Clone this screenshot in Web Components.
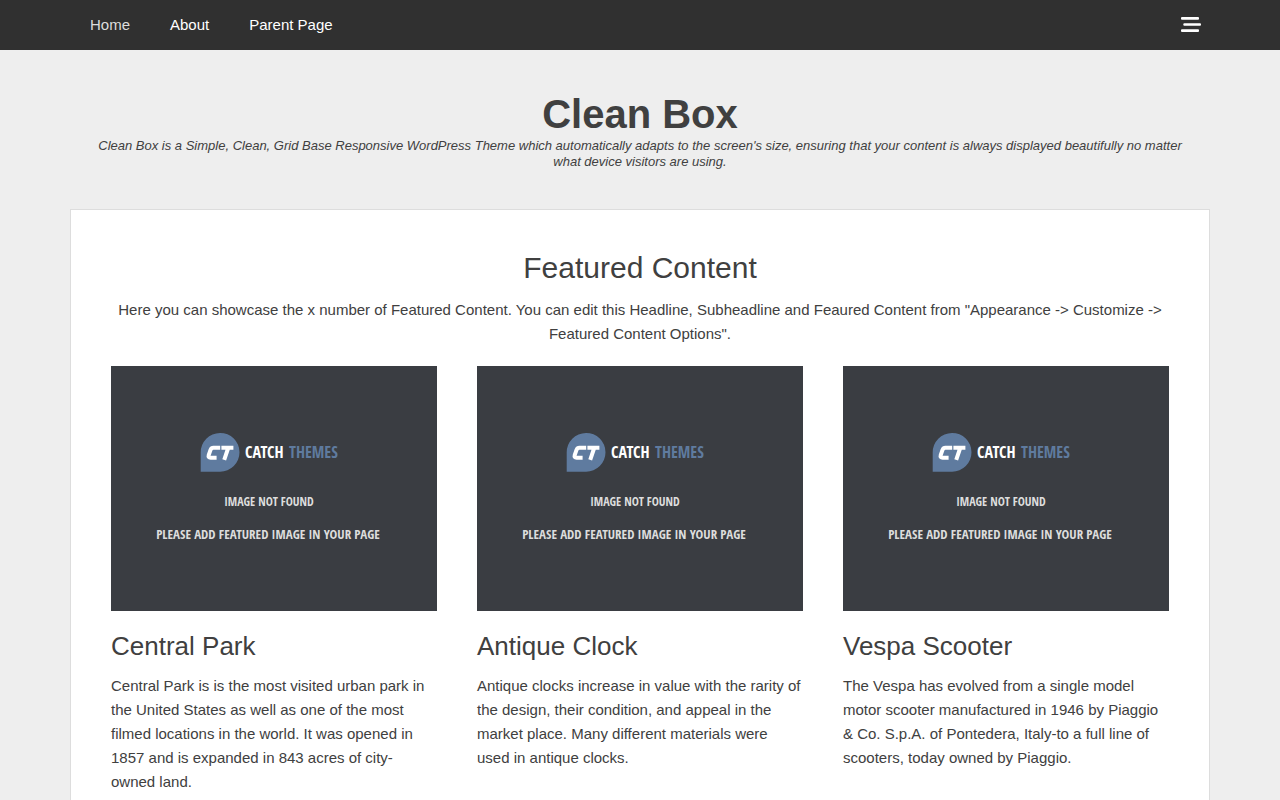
<!DOCTYPE html>
<html lang="en">
<head>
<meta charset="utf-8">
<meta name="viewport" content="width=device-width, initial-scale=1">
<title>Clean Box</title>
<style>
  body { margin: 0; background: #eee; color: #404040; font: 15px/24px "Liberation Sans", Arial, sans-serif; }
</style>
</head>
<body>
<nav-bar>
  <nav-link href="#home" current>Home</nav-link>
  <nav-link href="#about">About</nav-link>
  <nav-link href="#parent">Parent Page</nav-link>
</nav-bar>
<site-header>
  <span slot="title">Clean Box</span>
  Clean Box is a Simple, Clean, Grid Base Responsive WordPress Theme which automatically adapts to the screen's size, ensuring that your content is always displayed beautifully no matter what device visitors are using.
</site-header>
<featured-content>
  <span slot="title">Featured Content</span>
  <span slot="intro">Here you can showcase the x number of Featured Content. You can edit this Headline, Subheadline and Feaured Content from "Appearance -&gt; Customize -&gt; Featured Content Options".</span>
  <feature-card href="#central-park"><span slot="title">Central Park</span>Central Park is is the most visited urban park in the United States as well as one of the most filmed locations in the world. It was opened in 1857 and is expanded in 843 acres of city-owned land.</feature-card>
  <feature-card href="#antique-clock"><span slot="title">Antique Clock</span>Antique clocks increase in value with the rarity of the design, their condition, and appeal in the market place. Many different materials were used in antique clocks.</feature-card>
  <feature-card href="#vespa-scooter"><span slot="title">Vespa Scooter</span>The Vespa has evolved from a single model motor scooter manufactured in 1946 by Piaggio &amp; Co. S.p.A. of Pontedera, Italy-to a full line of scooters, today owned by Piaggio.</feature-card>
</featured-content>

<script>
class BaseElement extends HTMLElement {
  constructor() {
    super();
    this.attachShadow({ mode: 'open' }).innerHTML = this.constructor.markup;
  }
}

customElements.define('nav-link', class extends BaseElement {
  static markup = `
    <style>
      :host { display: block; }
      a { display: block; padding: 0 20px; line-height: 50px; color: #fff; text-decoration: none; }
      :host([current]) a, a:hover { color: #ddd; }
    </style>
    <a><slot></slot></a>`;
  connectedCallback() {
    const link = this.shadowRoot.querySelector('a');
    link.href = this.getAttribute('href');
    if (this.hasAttribute('current')) link.setAttribute('aria-current', 'page');
  }
});

customElements.define('nav-bar', class extends BaseElement {
  static markup = `
    <style>
      :host { display: block; background: #303030; }
      .inner { display: flex; justify-content: space-between; max-width: 1140px; margin: 0 auto; }
      nav { display: flex; flex-wrap: wrap; }
      button { width: 40px; height: 50px; padding: 0; border: 0; background: none; cursor: pointer; }
      svg { display: block; margin: 0 auto; }
    </style>
    <div class="inner">
      <nav aria-label="Primary"><slot></slot></nav>
      <button type="button" aria-label="Open menu">
        <svg width="22" height="18" viewBox="0 0 22 18" fill="#fff" aria-hidden="true">
          <rect x="2" y="1" width="18" height="2.7" rx="1"/>
          <rect x="4.3" y="7.2" width="17.7" height="2.6" rx="1"/>
          <rect x="2" y="13.2" width="18" height="2.7" rx="1"/>
        </svg>
      </button>
    </div>`;
});

customElements.define('site-header', class extends BaseElement {
  static markup = `
    <style>
      :host { display: block; max-width: 1100px; margin: 0 auto; padding: 40px 20px; text-align: center; }
      h1 { margin: 0; font-size: 40px; line-height: 48px; }
      p { margin: 0; font-size: 13px; line-height: 16px; font-style: italic; }
    </style>
    <header><h1><slot name="title"></slot></h1><p><slot></slot></p></header>`;
});

customElements.define('featured-content', class extends BaseElement {
  static markup = `
    <style>
      :host { display: block; box-sizing: border-box; max-width: 1140px; margin: -1px auto 40px; padding: 40px; background: #fff; border: 1px solid #ddd; }
      .intro { text-align: center; }
      h2 { margin: 0 0 12px; font-size: 30px; line-height: 36px; font-weight: normal; }
      p { margin: 0 0 20px; }
      .cards { display: grid; grid-template-columns: repeat(auto-fit, minmax(280px, 1fr)); gap: 40px; }
    </style>
    <section>
      <div class="intro"><h2><slot name="title"></slot></h2><p><slot name="intro"></slot></p></div>
      <div class="cards"><slot></slot></div>
    </section>`;
});

customElements.define('placeholder-image', class extends BaseElement {
  static markup = `
    <style>
      :host { display: block; background: #3a3d42; }
      svg { display: block; width: 100%; height: auto; }
      text { font-family: "Open Sans Condensed", "Liberation Sans Narrow", "Roboto Condensed", "DejaVu Sans Condensed", sans-serif; font-weight: bold; }
    </style>
    <svg viewBox="0 0 326 245">
      <path d="M89.7 105.7V86.5A19.4 19.4 0 1 1 109 105.7Z" fill="#5f7b9f"/>
      <g fill="none" stroke="#fff" stroke-width="4" stroke-linejoin="round">
        <path d="M109.2 81.7H102.4Q100.4 81.7 99.6 83.7L97.7 89.2Q97 91.8 99.6 91.8H105.6"/>
        <path d="M110.4 81.7H122.4M117.2 82L113.2 93.8"/>
      </g>
      <text x="134" y="92" font-size="16" fill="#fff">CATCH</text>
      <text x="178" y="92" font-size="16" fill="#5f7b9f">THEMES</text>
      <text x="158" y="140" font-size="12" fill="#ddd" text-anchor="middle">IMAGE NOT FOUND</text>
      <text x="157" y="173" font-size="13" fill="#ddd" text-anchor="middle">PLEASE ADD FEATURED IMAGE IN YOUR PAGE</text>
    </svg>`;
});

customElements.define('feature-card', class extends BaseElement {
  static markup = `
    <style>
      :host { display: block; }
      a { color: inherit; text-decoration: none; }
      h3 { margin: 20px 0 12px; font-size: 26px; line-height: 31px; font-weight: normal; }
      p { margin: 0; }
    </style>
    <article>
      <a><placeholder-image></placeholder-image><h3><slot name="title"></slot></h3></a>
      <p><slot></slot></p>
    </article>`;
  connectedCallback() {
    this.shadowRoot.querySelector('a').href = this.getAttribute('href');
  }
});
</script>
</body>
</html>
